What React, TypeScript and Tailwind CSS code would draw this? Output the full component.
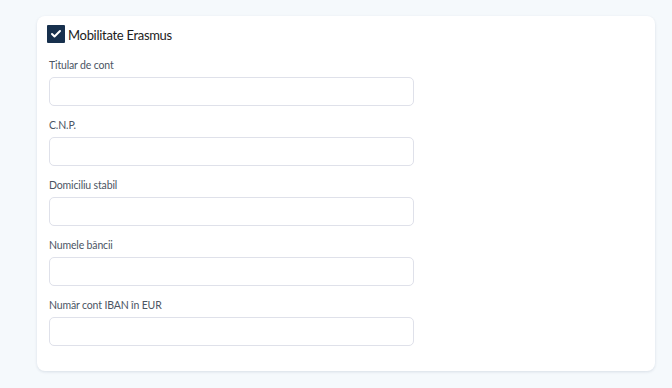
import { Check } from 'lucide-react';

const fields = ['Titular de cont', 'C.N.P.', 'Domiciliu stabil', 'Numele băncii', 'Număr cont IBAN în EUR'];

export default function App() {
    return (
        <div className="min-h-screen w-full bg-[#f5f9fc] pt-4 pl-[37px] pr-[17px]" style={{ fontFamily: 'Lato, "Noto Sans", sans-serif' }}>
            <div className="w-[618px] h-[355px] rounded-lg bg-white shadow-[0_1px_3px_rgba(20,40,80,0.12)] pl-3 pt-[9px]">
                <label className="flex items-end gap-[3px] -ml-[2px]">
                    <span className="flex h-[18px] w-[18px] items-center justify-center rounded-[1px] bg-[#17304d]">
                        <Check className="h-3 w-3 text-white" strokeWidth={4} />
                    </span>
                    <span className="text-[13px] leading-[16px] tracking-[-0.3px] text-[#1c1c1c]">Mobilitate Erasmus</span>
                </label>

                {/* bank details */}
                <div className="mt-[15px] flex flex-col">
                    {fields.map((f) => (
                        <div key={f} className="mb-[12px] flex flex-col">
                            <span className="text-[10.5px] leading-[15px] tracking-[-0.15px] text-[#4b5563]">{f}</span>
                            <input
                                type="text"
                                className="mt-1 h-[29px] w-[365px] rounded-[5px] border border-[#dfe1ea] bg-white outline-none"
                            />
                        </div>
                    ))}
                </div>
            </div>
        </div>
    );
}
